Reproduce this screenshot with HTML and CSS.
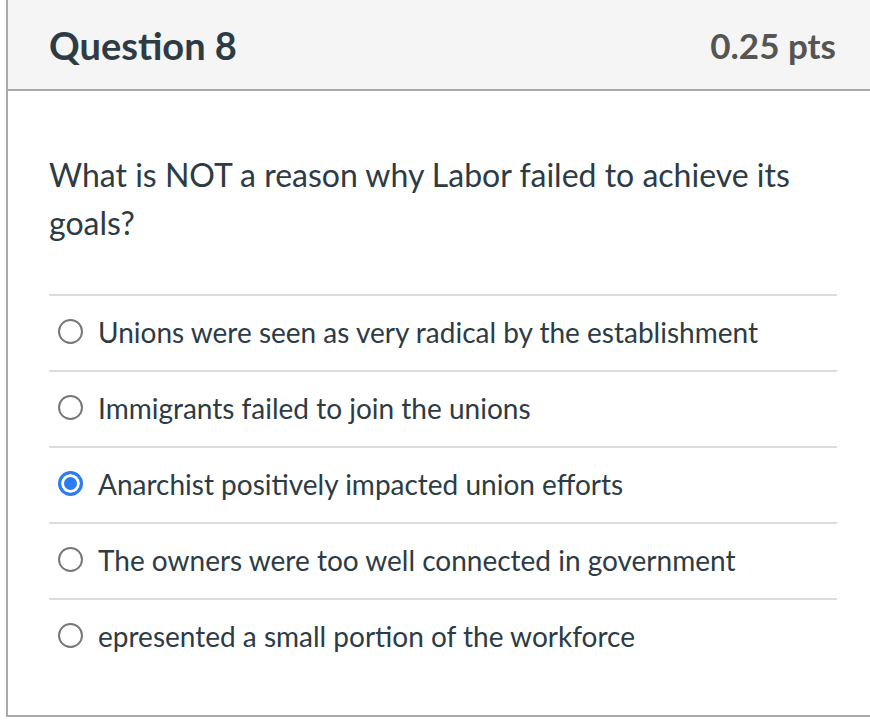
FILE: index.html
```html
<!DOCTYPE html>
<html>
<head>
<meta charset="utf-8">
<link rel="stylesheet" href="styles.css">
</head>
<body>
<div class="card">
  <div class="header">
    <h2 class="title">Question 8</h2>
    <div class="pts">0.25 pts</div>
  </div>
  <div class="body">
    <p class="question">What is NOT a reason why Labor failed to achieve its goals?</p>
    <div class="answers">
      <div class="answer"><span class="radio"></span><span class="label">Unions were seen as very radical by the establishment</span></div>
      <div class="answer"><span class="radio"></span><span class="label">Immigrants failed to join the unions</span></div>
      <div class="answer"><span class="radio checked"></span><span class="label">Anarchist positively impacted union efforts</span></div>
      <div class="answer"><span class="radio"></span><span class="label">The owners were too well connected in government</span></div>
      <div class="answer"><span class="radio"></span><span class="label">epresented a small portion of the workforce</span></div>
    </div>
  </div>
</div>
</body>
</html>
```
FILE: styles.css
```css
* { box-sizing: border-box; }
html, body { margin: 0; padding: 0; background: #fff; }
body { font-family: Lato, "Open Sans", sans-serif; color: #2d3b45; }
.card {
  margin-left: 6px;
  width: 880px;
  height: 717px;
  border-left: 2px solid #aaaaaa;
  border-bottom: 2px solid #aaaaaa;
  display: flex;
  flex-direction: column;
}
.header {
  height: 91px;
  background: #f5f5f5;
  border-bottom: 2px solid #aaaaaa;
  display: flex;
  align-items: center;
  justify-content: space-between;
  padding: 0 43px 0 41px;
}
.title {
  margin: 0;
  font-size: 38px;
  font-weight: 700;
  color: #2d3b45;
}
.pts {
  font-size: 35px;
  font-weight: 700;
  color: #555555;
  margin-right: 7px;
}
.body { padding: 60px 34px 0 41px; }
.question {
  margin: 0 0 47px 0;
  font-size: 32px;
  line-height: 48px;
  width: 788px;
}
.answers { width: 788px; }
.answer {
  border-top: 2px solid #dddddd;
  height: 76px;
  display: flex;
  align-items: center;
  padding-left: 9px;
  padding-bottom: 3px;
  gap: 15px;
}
.radio {
  width: 25px;
  height: 25px;
  border-radius: 50%;
  border: 2px solid #777777;
  flex: none;
  background: #fff;
}
.radio.checked {
  border: 3px solid #2b7cf3;
  background: #2b7cf3;
  box-shadow: inset 0 0 0 3px #ffffff;
}
.label { font-size: 28px; }
```
